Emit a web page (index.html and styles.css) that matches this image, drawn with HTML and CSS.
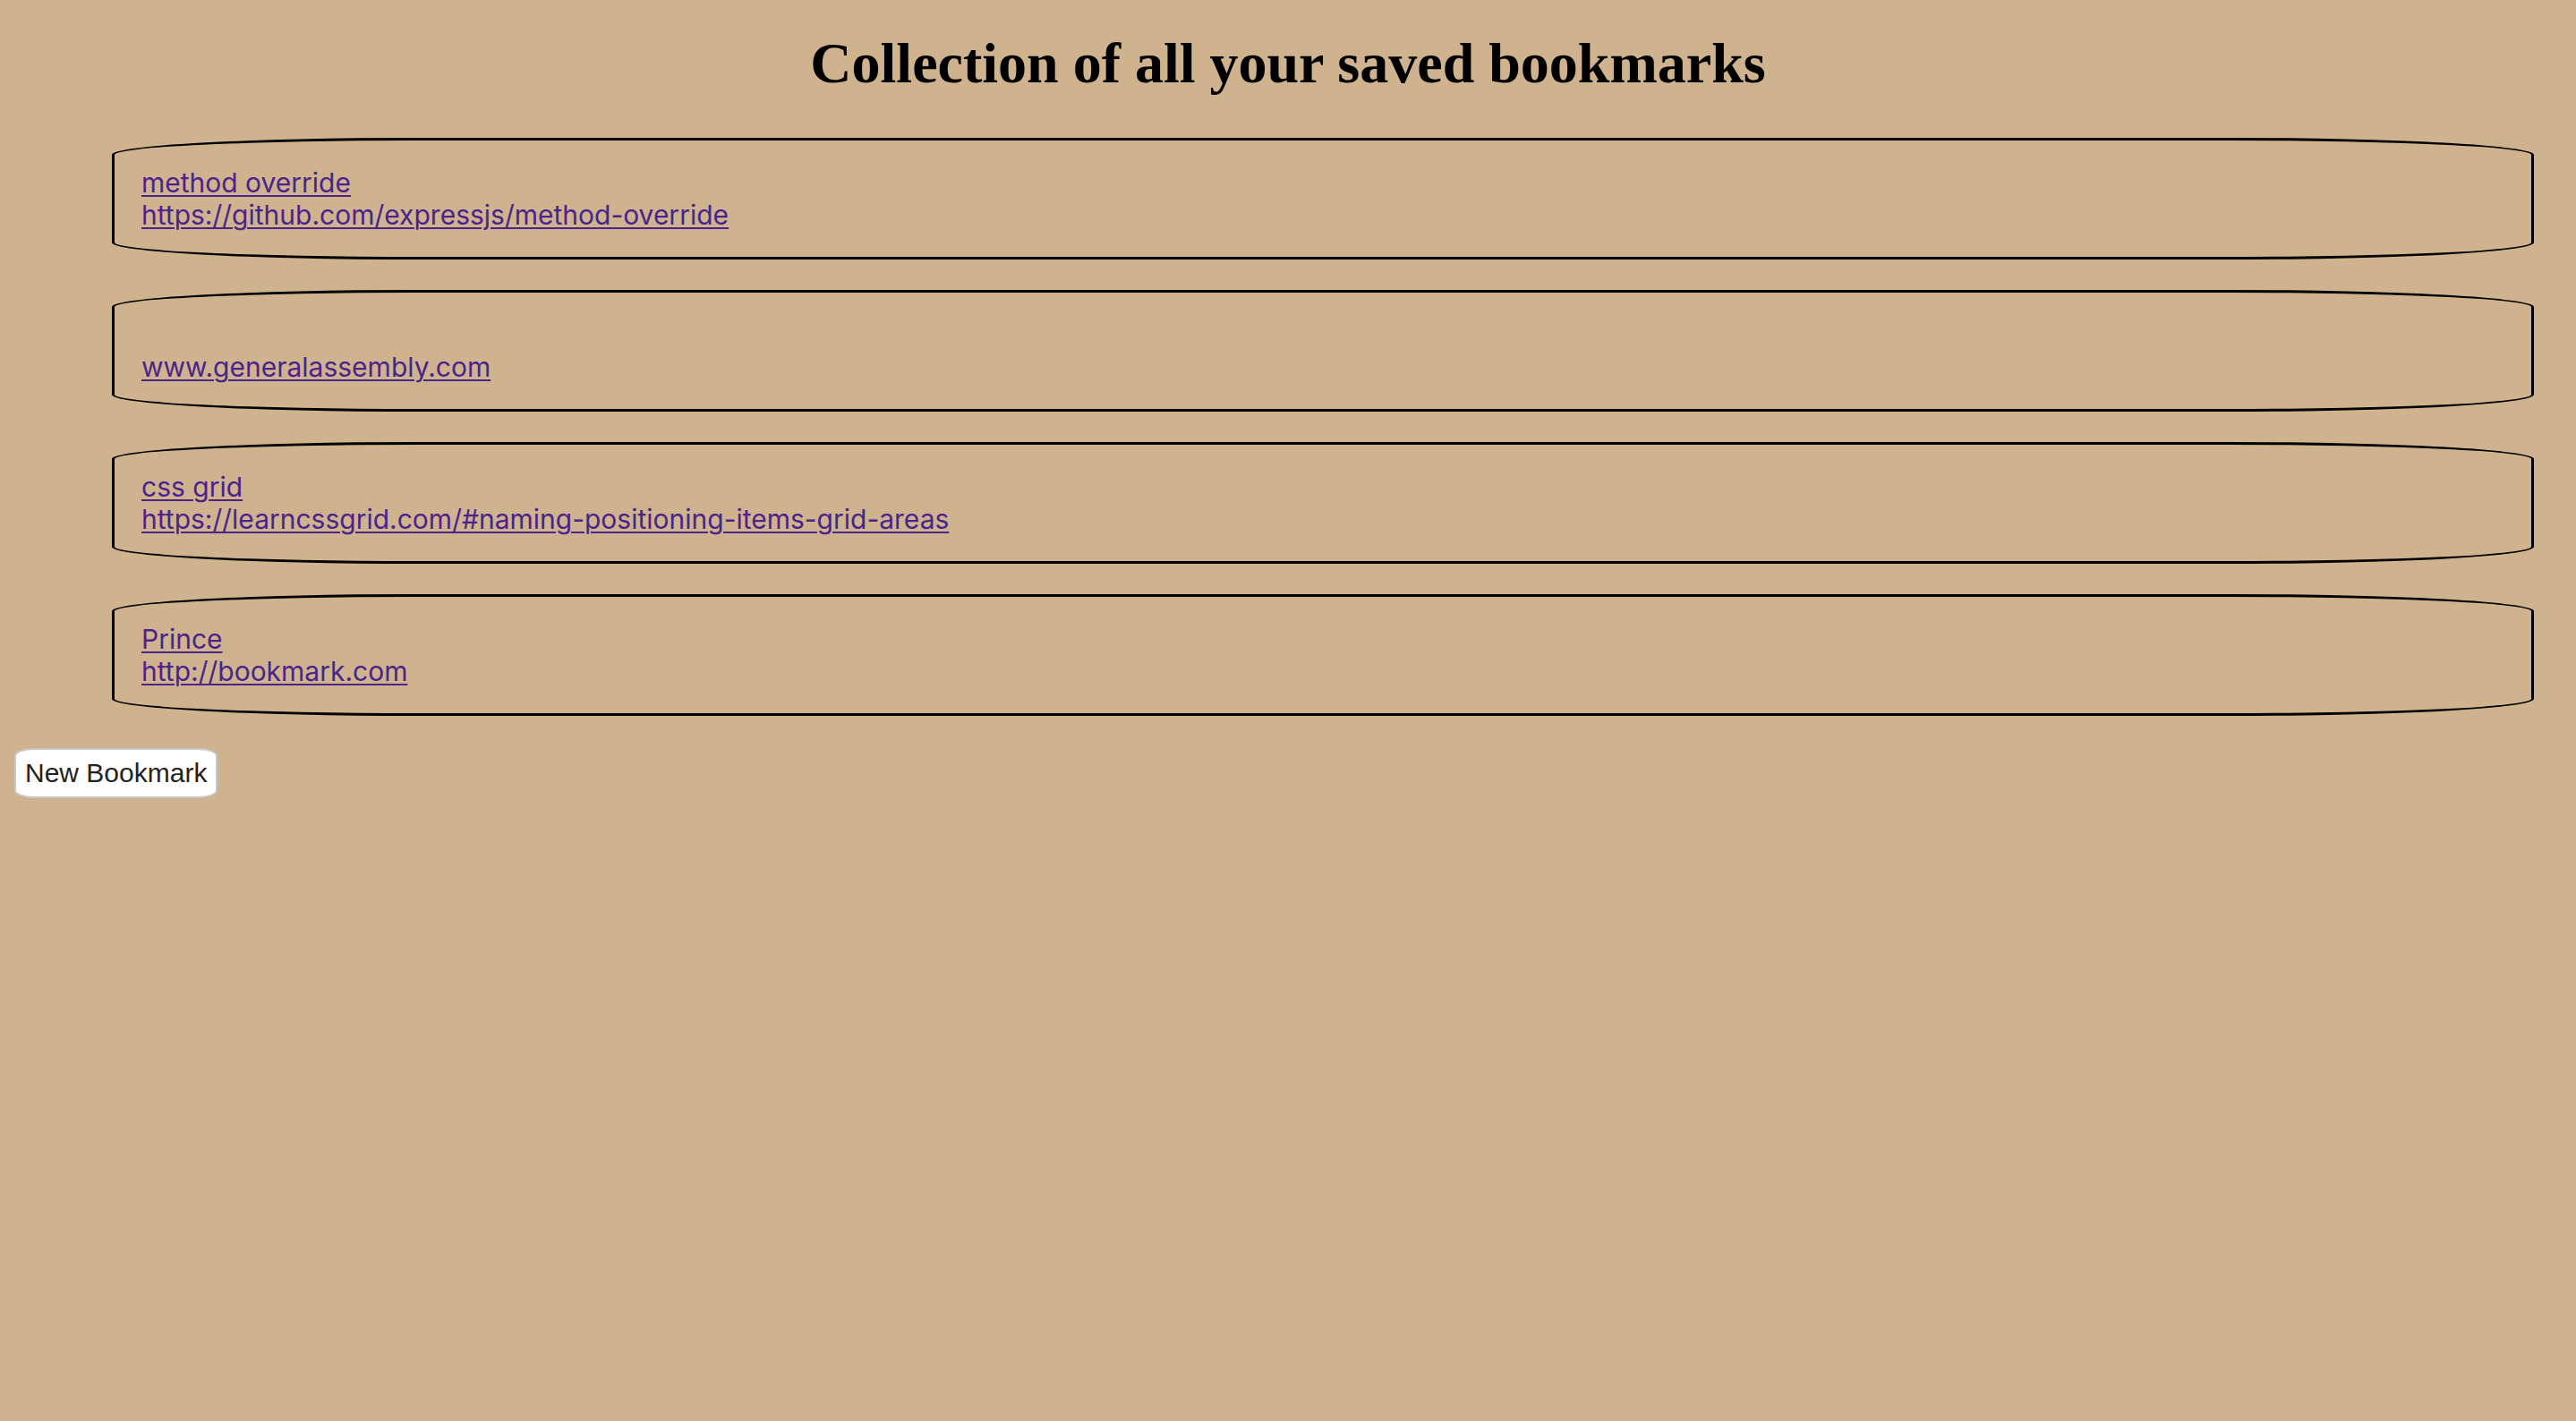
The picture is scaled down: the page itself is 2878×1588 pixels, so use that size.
FILE: index.html
```html
<!DOCTYPE html>
<html lang="en">
<head>
<meta charset="utf-8">
<title>Bookmarks</title>
<link rel="stylesheet" href="styles.css">
</head>
<body>
<h1 class="page-title">Collection of all your saved bookmarks</h1>
<div class="bookmark-list">
  <div class="bookmark-card">
    <a class="bookmark-link" href="#">method override</a><br>
    <a class="bookmark-link" href="#">https://github.com/expressjs/method-override</a>
  </div>
  <div class="bookmark-card">
    <a class="bookmark-link" href="#"></a><br>
    <a class="bookmark-link" href="#">www.generalassembly.com</a>
  </div>
  <div class="bookmark-card">
    <a class="bookmark-link" href="#">css grid</a><br>
    <a class="bookmark-link" href="#">https://learncssgrid.com/#naming-positioning-items-grid-areas</a>
  </div>
  <div class="bookmark-card">
    <a class="bookmark-link" href="#">Prince</a><br>
    <a class="bookmark-link" href="#">http://bookmark.com</a>
  </div>
</div>
<div class="actions">
  <button class="new-button" type="button">New Bookmark</button>
</div>
</body>
</html>
```
FILE: styles.css
```css
html, body {
  margin: 0;
  padding: 0;
}
body {
  background: #cfb38f;
  min-height: 1588px;
  box-sizing: border-box;
  padding: 0 16px;
}
.page-title {
  margin: 0;
  padding-top: 34px;
  font-family: "Liberation Serif", "Times New Roman", serif;
  font-size: 64px;
  font-weight: bold;
  line-height: 74px;
  text-align: center;
  color: #000;
}
.bookmark-list {
  margin: 46px 31px 0 109px;
  display: flex;
  flex-direction: column;
  gap: 34px;
}
.bookmark-card {
  border: 3px solid #000;
  border-radius: 340px / 19px;
  padding: 29px 30px;
  font-family: Inter, "Noto Sans", sans-serif;
  font-size: 30px;
  line-height: 36px;
}
.bookmark-link {
  color: #4c238a;
  text-decoration: underline;
  text-decoration-thickness: 2px;
  text-underline-offset: 3px;
}
.actions {
  margin-top: 36px;
}
.new-button {
  box-sizing: border-box;
  height: 56px;
  font-family: "Liberation Sans", Arial, sans-serif;
  font-size: 30px;
  line-height: 34px;
  color: #222;
  background: #fff;
  border: 2px solid #c8c8c8;
  border-radius: 22px / 9px;
  padding: 0 10px;
  margin: 0;
}
```
